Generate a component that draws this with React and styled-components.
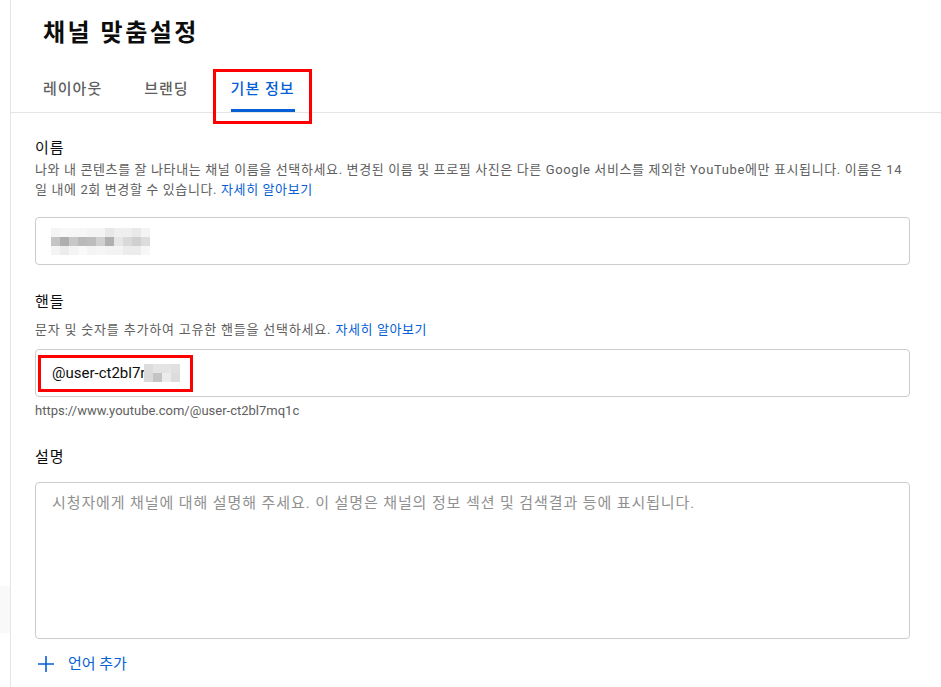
import React from "react";
import styled, { createGlobalStyle } from "styled-components";

const colors = {
    text: "#0d0d0d",
    grey: "#606060",
    placeholder: "#909090",
    blue: "#065fd4",
    line: "#e5e5e5",
    border: "#cccccc",
    red: "#ff0000",
};

const fontStack = `Roboto, "Noto Sans CJK KR", "Noto Sans", sans-serif`;

const GlobalStyle = createGlobalStyle`
    html, body {
        margin: 0;
        padding: 0;
        background: #fff;
    }
    body {
        font-family: ${fontStack};
        color: ${colors.text};
    }
`;

const nameMosaic = [
    ["#f4f4f4", "#f8f8f8", "#f7f7f7", "#f7f7f7", "#f4f4f4", "#f4f4f4", "#e8e8e8", "#efefef", "#efefef", "#e9e9e9", "#f4f4f4"],
    ["#c4c4c4", "#aeaeae", "#c8c8c8", "#bababa", "#bdbdbd", "#d0d0d0", "#b0b0b0", "#e6e6e6", "#d9d9d9", "#cfcfcf", "#dcdcdc"],
    ["#f4f4f4", "#ececec", "#f4f4f4", "#f9f9f9", "#f4f4f4", "#f6f6f6", "#f3f3f3", "#f3f3f3", "#ececec", "#ececec", "#f7f7f7"],
];

const handleMosaic = [
    ["#dcdcdc", "#e4e4e4", "#e4e4e4", "#e0e0e0"],
    ["#dadada", "#c4c4c4", "#ececec", "#dcdcdc"],
];

const tabs = ["레이아웃", "브랜딩", "기본 정보"];

function Mosaic({ rows, cell = 9 }) {
    const w = rows[0].length * cell;
    const h = rows.length * cell;
    return (
        <svg width={w} height={h} viewBox={`0 0 ${w} ${h}`} style={{ display: "block" }}>
            {rows.map((row, r) =>
                row.map((c, i) => (
                    <rect key={`${r}-${i}`} x={i * cell} y={r * cell} width={cell} height={cell} fill={c} />
                ))
            )}
        </svg>
    );
}

function PlusIcon() {
    return (
        <svg width="18" height="18" viewBox="0 0 18 18">
            <path d="M9 1v16M1 9h16" stroke={colors.blue} strokeWidth="1.6" fill="none" />
        </svg>
    );
}

export default function App() {
    return (
        <>
            <GlobalStyle />
            <Page>
                <Rail>
                    <RailPatch />
                </Rail>
                <Main>
                    <Header>
                        <Title>채널 맞춤설정</Title>
                        <TabBar>
                            {tabs.map((t, i) => (
                                <Tab key={t} $active={i === 2}>
                                    {t}
                                    {i === 2 && <TabMark />}
                                </Tab>
                            ))}
                        </TabBar>
                    </Header>

                    <Content>
                        <Section $top={23}>
                            <Label>이름</Label>
                            <Help>
                                나와 내 콘텐츠를 잘 나타내는 채널 이름을 선택하세요. 변경된 이름 및 프로필 사진은 다른 Google 서비스를 제외한 YouTube에만 표시됩니다. 이름은 14일 내에 2회 변경할 수 있습니다.{" "}
                                <Link href="#">자세히 알아보기</Link>
                            </Help>
                            <Field $gap={17}>
                                <Mosaic rows={nameMosaic} />
                            </Field>
                        </Section>

                        <Section $top={25}>
                            <Label>핸들</Label>
                            <Help $gap={6} $spacing={0.8}>
                                문자 및 숫자를 추가하여 고유한 핸들을 선택하세요. <Link href="#">자세히 알아보기</Link>
                            </Help>
                            <Field $gap={9} $pad={16}>
                                <HandleText>@user-ct2bl7r</HandleText>
                                <Mosaic rows={handleMosaic} />
                                <Highlight />
                            </Field>
                            <Url>https://www.youtube.com/@user-ct2bl7mq1c</Url>
                        </Section>

                        <Section $top={24}>
                            <Label>설명</Label>
                            <TextBox>
                                <Placeholder>
                                    시청자에게 채널에 대해 설명해 주세요. 이 설명은 채널의 정보 섹션 및 검색결과 등에 표시됩니다.
                                </Placeholder>
                            </TextBox>
                            <AddLanguage>
                                <PlusIcon />
                                언어 추가
                            </AddLanguage>
                        </Section>
                    </Content>
                </Main>
            </Page>
        </>
    );
}

const Page = styled.div`
    display: flex;
    min-height: 687px;
    background: #fff;
`;

const Rail = styled.div`
    width: 10px;
    flex-shrink: 0;
`;

const RailPatch = styled.div`
    margin-top: 586px;
    height: 47px;
    background: #f9f9f9;
`;

const Main = styled.div`
    flex: 1;
    border-left: 1px solid ${colors.line};
    min-width: 0;
`;

const Header = styled.div`
    padding-top: 17px;
    border-bottom: 1px solid ${colors.line};
`;

const Title = styled.h1`
    margin: 0 0 14px 32px;
    font-size: 24px;
    line-height: 32px;
    font-weight: 700;
    letter-spacing: 2.5px;
    color: ${colors.text};
`;

const TabBar = styled.div`
    display: flex;
    gap: 42px;
    padding-left: 32px;
`;

const Tab = styled.div`
    position: relative;
    height: 49px;
    display: flex;
    align-items: center;
    font-size: 15px;
    font-weight: 500;
    letter-spacing: 1px;
    color: ${(p) => (p.$active ? colors.blue : colors.grey)};

    ${(p) =>
        p.$active &&
        `
        &::after {
            content: "";
            position: absolute;
            left: 0;
            right: 0;
            bottom: 0;
            height: 3px;
            background: ${colors.blue};
        }
    `}
`;

const TabMark = styled.span`
    position: absolute;
    left: -18px;
    top: 6px;
    width: 99px;
    height: 55px;
    box-sizing: border-box;
    border: 3px solid ${colors.red};
    z-index: 2;
`;

const Content = styled.div`
    padding: 0 31px 0 24px;
`;

const Section = styled.section`
    padding-top: ${(p) => p.$top}px;
`;

const Label = styled.div`
    font-size: 15px;
    line-height: 24px;
    letter-spacing: 1px;
    color: ${colors.text};
`;

const Help = styled.div`
    margin-top: ${(p) => p.$gap || 0}px;
    font-size: 13px;
    line-height: 20px;
    letter-spacing: ${(p) => p.$spacing || 0.62}px;
    color: ${colors.grey};
`;

const Link = styled.a`
    color: ${colors.blue};
    text-decoration: none;
    letter-spacing: 0.6px;
`;

const Field = styled.div`
    position: relative;
    margin-top: ${(p) => p.$gap}px;
    height: 48px;
    box-sizing: border-box;
    border: 1px solid ${colors.border};
    border-radius: 4px;
    display: flex;
    align-items: center;
    padding-left: ${(p) => p.$pad || 15}px;
`;

const HandleText = styled.span`
    font-size: 15px;
    color: ${colors.text};
    margin-right: -1px;
`;

const Highlight = styled.span`
    position: absolute;
    left: 2px;
    top: 5px;
    width: 155px;
    height: 37px;
    box-sizing: border-box;
    border: 3px solid ${colors.red};
`;

const Url = styled.div`
    margin-top: 4px;
    font-size: 13px;
    line-height: 20px;
    color: ${colors.grey};
`;

const TextBox = styled.div`
    margin-top: 13px;
    height: 157px;
    box-sizing: border-box;
    border: 1px solid ${colors.border};
    border-radius: 4px;
    padding: 10px 16px;
`;

const Placeholder = styled.div`
    font-size: 15px;
    line-height: 21px;
    letter-spacing: 0.9px;
    color: ${colors.placeholder};
`;

const AddLanguage = styled.div`
    margin-top: 13px;
    display: flex;
    align-items: center;
    gap: 13px;
    padding-left: 2px;
    font-size: 15px;
    line-height: 24px;
    color: ${colors.blue};
`;
